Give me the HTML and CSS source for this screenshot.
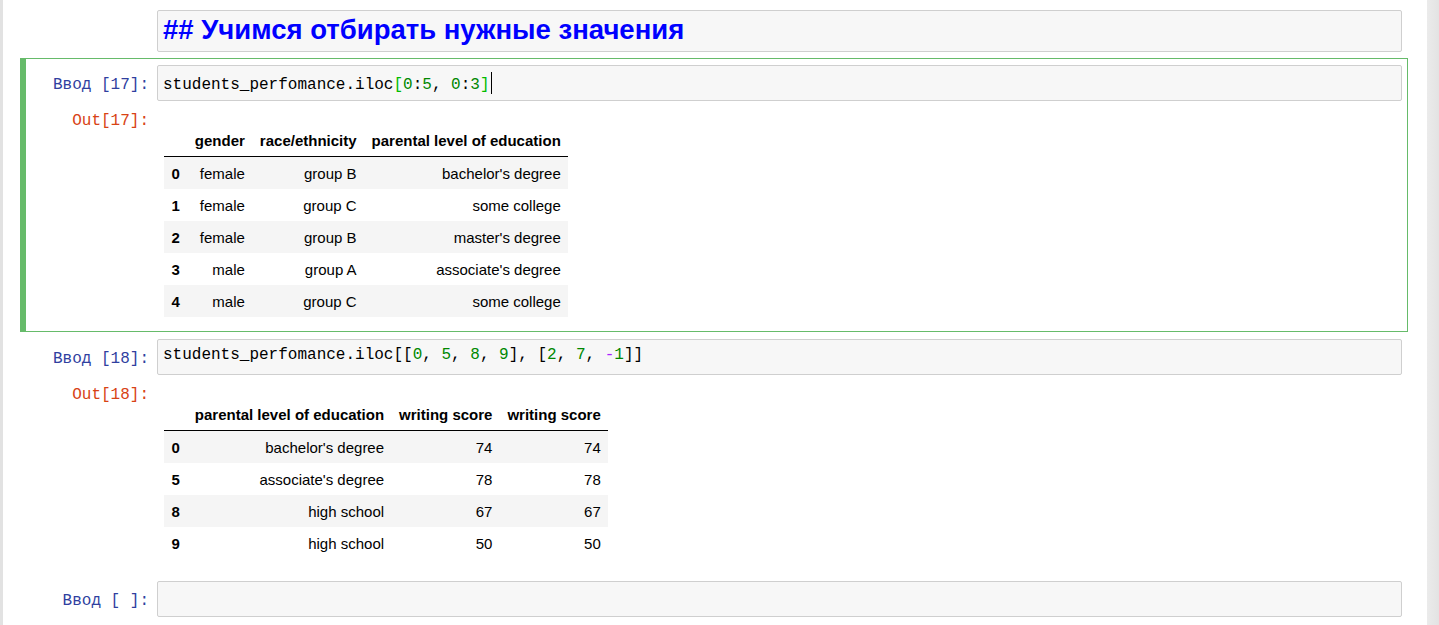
FILE: index.html
```html
<!DOCTYPE html>
<html lang="ru">
<head>
<meta charset="utf-8">
<title>Notebook</title>
<link rel="stylesheet" href="styles.css">
</head>
<body>
<div class="strip-left"></div>
<div class="notebook">
  <div class="cell">
    <div class="row">
      <div class="prompt"></div>
      <div class="editor md"><span class="md-h2">## Учимся отбирать нужные значения</span></div>
    </div>
  </div>

  <div class="cell selected">
    <div class="row">
      <div class="prompt in">Ввод [17]:</div>
      <div class="editor code">students_perfomance.iloc<span class="mb">[</span><span class="num">0</span>:<span class="num">5</span>, <span class="num">0</span>:<span class="num">3</span><span class="mb">]</span><span class="cursor"></span></div>
    </div>
    <div class="row">
      <div class="prompt out">Out[17]:</div>
      <div class="output">
        <table class="df">
          <thead>
            <tr><th></th><th>gender</th><th>race/ethnicity</th><th>parental level of education</th></tr>
          </thead>
          <tbody>
            <tr><th>0</th><td>female</td><td>group B</td><td>bachelor's degree</td></tr>
            <tr><th>1</th><td>female</td><td>group C</td><td>some college</td></tr>
            <tr><th>2</th><td>female</td><td>group B</td><td>master's degree</td></tr>
            <tr><th>3</th><td>male</td><td>group A</td><td>associate's degree</td></tr>
            <tr><th>4</th><td>male</td><td>group C</td><td>some college</td></tr>
          </tbody>
        </table>
      </div>
    </div>
  </div>

  <div class="cell">
    <div class="row">
      <div class="prompt in">Ввод [18]:</div>
      <div class="editor code">students_perfomance.iloc[[<span class="num">0</span>, <span class="num">5</span>, <span class="num">8</span>, <span class="num">9</span>], [<span class="num">2</span>, <span class="num">7</span>, <span class="op">-</span><span class="num">1</span>]]</div>
    </div>
    <div class="row">
      <div class="prompt out">Out[18]:</div>
      <div class="output">
        <table class="df">
          <thead>
            <tr><th></th><th>parental level of education</th><th>writing score</th><th>writing score</th></tr>
          </thead>
          <tbody>
            <tr><th>0</th><td>bachelor's degree</td><td>74</td><td>74</td></tr>
            <tr><th>5</th><td>associate's degree</td><td>78</td><td>78</td></tr>
            <tr><th>8</th><td>high school</td><td>67</td><td>67</td></tr>
            <tr><th>9</th><td>high school</td><td>50</td><td>50</td></tr>
          </tbody>
        </table>
      </div>
    </div>
  </div>

  <div class="cell">
    <div class="row">
      <div class="prompt in">Ввод [&nbsp;]:</div>
      <div class="editor code"></div>
    </div>
  </div>
</div>
<div class="strip-right"></div>
</body>
</html>
```

FILE: styles.css
```css
html, body {
  margin: 0;
  height: 100%;
}
body {
  display: flex;
  overflow: hidden;
  background: #fff;
}
.strip-left {
  width: 3px;
  flex: none;
  background: #e2e2e2;
}
.strip-right {
  width: 12px;
  flex: none;
  background: linear-gradient(90deg, #ebebeb, #e3e3e3);
}
.notebook {
  flex: 1;
  padding: 3px 19px 0 17px;
  background: #fff;
}
.cell {
  border: 1px solid transparent;
  border-left-width: 6px;
  padding: 6px 5px 5px 5px;
}
.cell.selected {
  border-color: #66bb6a;
}
.row {
  display: flex;
}
.prompt {
  width: 126px;
  flex: none;
  box-sizing: border-box;
  padding-right: 8px;
  text-align: right;
  font-family: "Liberation Mono", monospace;
  font-size: 16px;
  line-height: 18px;
}
.prompt.in {
  color: #303f9f;
  padding-top: 11px;
}
.prompt.out {
  color: #d84315;
  padding-top: 11px;
}
.editor {
  flex: 1;
  background: #f7f7f7;
  border: 1px solid #cfcfcf;
  border-radius: 2px;
  box-sizing: border-box;
}
.editor.md {
  height: 42px;
  padding: 0 5px;
  line-height: 38px;
}
.md-h2 {
  font-family: "Liberation Sans", Arial, sans-serif;
  font-weight: bold;
  font-size: 27.5px;
  color: #0000ff;
}
.editor.code {
  height: 36px;
  padding: 6px 5px 10px;
  font-family: "Liberation Mono", monospace;
  font-size: 16px;
  line-height: 18px;
  color: #000;
  white-space: pre;
}
.num { color: #008800; }
.mb { color: #00bb00; }
.op { color: #aa22ff; }
.cursor {
  display: inline-block;
  width: 0;
  height: 22px;
  border-left: 1px solid #000;
  vertical-align: -5px;
  margin-left: 1px;
}
.output {
  flex: 1;
  padding: 23px 0 9px 7px;
}
.df {
  border-collapse: separate;
  border-spacing: 0;
  font-family: "Liberation Sans", Arial, sans-serif;
  font-size: 15px;
  color: #000;
}
.df th, .df td {
  padding: 9px 7.5px 7px;
  line-height: 16px;
  text-align: right;
  white-space: nowrap;
}
.df th {
  font-weight: bold;
}
.df thead th {
  border-bottom: 1px solid #000;
}
.df tbody tr:nth-child(odd) {
  background: #f5f5f5;
}
.df tbody th {
  text-align: left;
}
```
